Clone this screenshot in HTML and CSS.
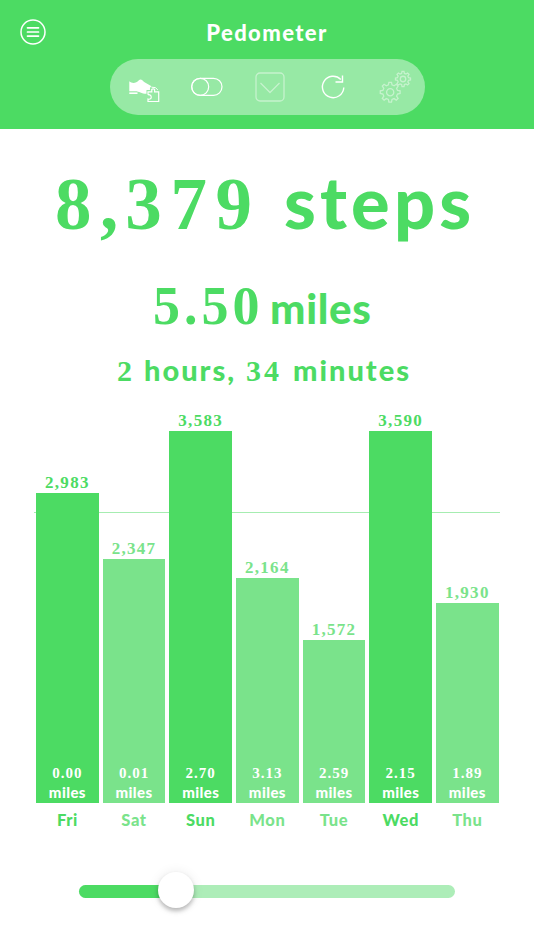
FILE: index.html
```html
<!DOCTYPE html>
<html lang="en">
<head>
<meta charset="utf-8">
<title>Pedometer</title>
<link rel="stylesheet" href="styles.css">
</head>
<body>
<header class="header">
  <div class="titlebar">
    <svg class="menu" width="28" height="28" viewBox="0 0 28 28"><circle cx="14" cy="14" r="12" stroke-width="1.500"/><path d="M8.500 9.800h11M8.500 14h11M8.500 18.100h11" stroke-width="1.700" stroke-linecap="round"/></svg>
    <h1 class="title">Pedometer</h1>
  </div>
  <nav class="toolbar">
    <svg width="34" height="34" viewBox="127 70 34 34"><path class="solid" d="M129.300 81.300C131.500 83.300 134 83.400 136.300 82.300 138.300 81.200 139 79.500 140.800 79.500 142.600 79.800 143.200 81.500 145 82.500L151.500 86.200C149.800 87.300 149.800 88.500 150 90H146.500V93.800C141.500 93.700 139 91.200 135.500 91.200H129.300Z"/><path d="M129.300 93.200h8.200" stroke-width="1.600"/><path d="M148 94.800V91.800H151.800V90.500C150.800 88.300 155.600 88.300 154.600 90.500V91.800H158.700V101.500H148V99C152.300 100.500 152.300 93.900 148 94.800" stroke-width="1.200"/><path d="M151.500 87.200q4.500-.500 6.300 2.600" stroke-width="1"/></svg>
    <svg width="32" height="20" viewBox="0 0 32 20"><rect x=".7" y="1.300" width="30.300" height="17" rx="8.500" stroke-width="1.200"/><circle cx="9.200" cy="9.800" r="8.500" stroke-width="1.200"/></svg>
    <svg class="dim" width="30" height="30" viewBox="0 0 30 30"><rect x="1" y="1" width="28" height="28" rx="4" stroke-width="1.300"/><path d="M5.500 11l9.500 9.500 9.500-9.500" stroke-width="1.300"/></svg>
    <svg width="26" height="26" viewBox="0 0 26 26"><path d="M20.800 5.500A10.700 10.700 0 1 0 23.800 13.500M15.500 8h7V1.500" stroke-width="1.400"/></svg>
    <svg class="dim" width="34" height="34" viewBox="0 0 34 34"><defs><path id="gear" d="M-1.800-7.300-1.300-9.900H1.300L1.800-7.300 3.900-6.400 6.100-7.900 7.900-6.100 6.400-3.900 7.300-1.800 9.900-1.300V1.300L7.300 1.800 6.400 3.900 7.900 6.100 6.100 7.900 3.900 6.400 1.800 7.300 1.300 9.900H-1.300L-1.800 7.300-3.900 6.400-6.100 7.900-7.900 6.100-6.400 3.900-7.300 1.800-9.900 1.300V-1.300L-7.300-1.800-6.400-3.900-7.900-6.100-6.100-7.900-3.900-6.400Z"/></defs><g transform="translate(11.200 22.200)" stroke-width="1.300"><use href="#gear"/><circle r="3.600"/></g><g transform="translate(24 9) scale(.76)" stroke-width="1.700"><use href="#gear"/><circle r="3.600"/></g></svg>
  </nav>
</header>
<main>
  <div class="steps"><span class="num">8<span class="comma">,</span>379</span><span class="word">steps</span></div>
  <div class="distance"><span class="num">5.50</span><span class="word">miles</span></div>
  <div class="duration"><span class="num">2</span><span class="word hours">hours,</span><span class="num">34</span><span class="word">minutes</span></div>
  <section class="chart">
    <div class="average"></div>
    <div class="day high"><b class="count">2,983</b><div class="bar" style="height:309.200px"><b>0.00</b><span>miles</span></div><span class="name">Fri</span></div>
    <div class="day"><b class="count">2,347</b><div class="bar" style="height:243.500px"><b>0.01</b><span>miles</span></div><span class="name">Sat</span></div>
    <div class="day high"><b class="count">3,583</b><div class="bar" style="height:371.300px"><b>2.70</b><span>miles</span></div><span class="name">Sun</span></div>
    <div class="day"><b class="count">2,164</b><div class="bar" style="height:224.500px"><b>3.13</b><span>miles</span></div><span class="name">Mon</span></div>
    <div class="day"><b class="count">1,572</b><div class="bar" style="height:163px"><b>2.59</b><span>miles</span></div><span class="name">Tue</span></div>
    <div class="day high"><b class="count">3,590</b><div class="bar" style="height:371.800px"><b>2.15</b><span>miles</span></div><span class="name">Wed</span></div>
    <div class="day"><b class="count">1,930</b><div class="bar" style="height:200px"><b>1.89</b><span>miles</span></div><span class="name">Thu</span></div>
  </section>
  <div class="slider"><div class="filled"></div><div class="thumb"></div></div>
</main>
</body>
</html>
```
FILE: styles.css
```css
* { box-sizing: border-box; }
body {
  margin: 0;
  height: 950px;
  overflow: hidden;
  background: #fff;
  color: #4cdb63;
  font-family: Lato, "Liberation Sans", sans-serif;
  font-weight: 900;
}
svg { display: block; fill: none; stroke: #fff; flex: none; }
.solid { fill: #fff; stroke: none; }
.dim { opacity: .45; }
.header { height: 129px; background: #4cdb63; }
.titlebar { height: 58.500px; padding-top: 18px; display: grid; grid-template-columns: 46px 1fr 46px; }
.menu { margin-left: 18.500px; }
.title {
  margin: 0;
  color: #fff;
  font-size: 22px;
  font-weight: 900;
  line-height: 29px;
  letter-spacing: 1.400px;
  text-align: center;
}
.toolbar {
  width: 315px;
  height: 56px;
  margin: 0 auto;
  border-radius: 28px;
  background: #97e9a5;
  display: grid;
  grid-template-columns: 69px 57px 69px 57px 69px;
  align-items: center;
  justify-items: center;
  justify-content: center;
  padding-left: 6px;
}
.num, .count, .bar b { font-family: "Liberation Serif", serif; font-weight: 700; }
.steps, .distance, .duration { display: flex; align-items: baseline; white-space: nowrap; }
.steps { height: 135px; padding: 32px 0 0 55px; line-height: 80px; }
.steps .num { width: 229px; font-size: 73px; letter-spacing: 8.600px; }
.steps .comma { letter-spacing: 7px; }
.steps .word { font-size: 72px; letter-spacing: 4.200px; }
.distance { height: 80px; padding: 10px 0 0 153px; line-height: 64px; }
.distance .num { width: 117px; font-size: 54px; letter-spacing: 4px; }
.distance .word { font-size: 42px; letter-spacing: .700px; }
.duration { height: 56px; padding: 6px 0 0 117px; line-height: 40px; }
.duration .num { width: 27px; font-size: 30px; letter-spacing: 3px; }
.duration .word { font-size: 29px; letter-spacing: 2px; }
.duration .hours { width: 102px; }
.duration .hours + .num { width: 47px; }
.chart {
  position: relative;
  height: 435px;
  margin: 0 35.300px 0 36px;
  display: grid;
  grid-template-columns: repeat(7, 1fr);
  column-gap: 3.900px;
  align-items: end;
}
.average { position: absolute; top: 112px; left: -2px; right: -1px; height: 1px; background: #a6edb1; }
.day { position: relative; color: #7ae38b; display: flex; flex-direction: column; align-items: center; }
.high { color: #4cdb63; }
.count { font-size: 17px; line-height: 21px; letter-spacing: 1.300px; }
.bar {
  width: 100%;
  background: currentColor;
  display: flex;
  flex-direction: column;
  justify-content: flex-end;
  align-items: center;
  line-height: 19.500px;
}
.bar b, .bar span { color: #fff; font-size: 15px; letter-spacing: 1px; }
.bar span { letter-spacing: .400px; }
.name { height: 32.500px; font-size: 16.500px; line-height: 34px; letter-spacing: .600px; }
.slider {
  position: relative;
  width: 376px;
  height: 13px;
  margin: 50px 0 0 79px;
  border-radius: 7px;
  background: #adedb8;
}
.filled { width: 97px; height: 13px; border-radius: 7px 0 0 7px; background: #4cdb63; }
.thumb {
  position: absolute;
  left: 79px;
  top: -13px;
  width: 36px;
  height: 36px;
  border-radius: 50%;
  background: #fff;
  box-shadow: 0 3px 4px rgba(0, 0, 0, .25), 0 0 12px rgba(0, 0, 0, .08);
}
```
